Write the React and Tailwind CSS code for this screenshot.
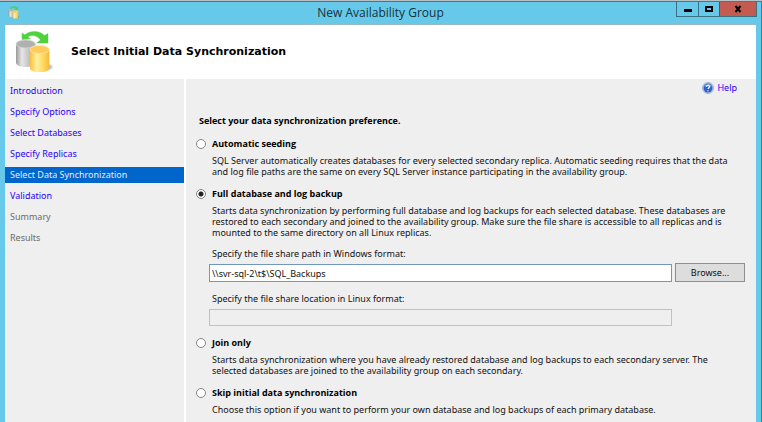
import React, { useState } from "react";

const steps = [
  { name: "Introduction", state: "done" },
  { name: "Specify Options", state: "done" },
  { name: "Select Databases", state: "done" },
  { name: "Specify Replicas", state: "done" },
  { name: "Select Data Synchronization", state: "current" },
  { name: "Validation", state: "done" },
  { name: "Summary", state: "todo" },
  { name: "Results", state: "todo" },
];

const stepStyles = {
  done: "text-[#2a00ff]",
  current: "bg-[#0066cc] text-[#e4eefa]",
  todo: "text-[#6b6b6b]",
};

function DatabasesIcon({ className, id }) {
  return (
    <svg className={className} viewBox="0 0 40 44" aria-hidden="true">
      <defs>
        <linearGradient id={id + "grey"} x1="0" x2="1">
          <stop offset="0" stopColor="#999" />
          <stop offset="0.3" stopColor="#e6e6e6" />
          <stop offset="0.6" stopColor="#c9c9c9" />
          <stop offset="1" stopColor="#a0a0a0" />
        </linearGradient>
        <linearGradient id={id + "gold"} x1="0" x2="1">
          <stop offset="0" stopColor="#fbbf3c" />
          <stop offset="0.35" stopColor="#fff0a2" />
          <stop offset="0.65" stopColor="#ffdc62" />
          <stop offset="1" stopColor="#fab838" />
        </linearGradient>
        <radialGradient id={id + "shade"}>
          <stop offset="0" stopColor="#555" stopOpacity="0.7" />
          <stop offset="1" stopColor="#555" stopOpacity="0" />
        </radialGradient>
      </defs>
      <ellipse cx="32" cy="37" rx="7" ry="4" fill={`url(#${id}shade)`} />
      <path d="M1 14v18.500c0 2.600 4 4.500 9.800 4.500s9.700-1.900 9.700-4.500V14z" fill={`url(#${id}grey)`} />
      <ellipse cx="10.700" cy="14" rx="9.700" ry="4" fill="#b0b0b0" stroke="#d6d6d6" strokeWidth="0.800" />
      <path d="M15 19.500V38c0 2.500 4 4.200 9.700 4.200s9.700-1.700 9.700-4.200V19.500z" fill={`url(#${id}gold)`} />
      <ellipse cx="24.700" cy="19.500" rx="9.600" ry="4" fill="#fccb5c" stroke="#ffe9a0" strokeWidth="0.800" />
      <path d="M7 3l2.600 1.800C15.500 0 25 .300 29.300 5.500L33 3.500v9.500H21.500l3.900-3C22.700 5.600 17 4.300 12.700 7l2.800 1.800L7 9.500z" fill="#4fd23c" stroke="#55c948" strokeWidth="0.400" />
    </svg>
  );
}

function HelpIcon() {
  return (
    <svg className="size-3" viewBox="0 0 12 12" aria-hidden="true">
      <circle cx="6" cy="6" r="5.500" fill="#c9d6ec" stroke="#8ea2c4" strokeWidth="0.800" />
      <circle cx="6" cy="6" r="4.500" fill="#2d63c8" />
      <path d="M2.200 4.700a4.200 4.200 0 0 1 7.600 0Q6 3.300 2.200 4.700z" fill="#84adeb" />
      <path d="M4.400 4.700c.2-1.900 3.300-1.800 3.200 0C7.500 5.700 6 5.800 6 7.100M6 8.200v1" fill="none" stroke="#fff" strokeWidth="1.200" />
    </svg>
  );
}

function Option({ id, title, selected, onSelect, lines, children }) {
  return (
    <section className="pb-[9px]">
      <div className="flex h-4 items-center gap-[6px]">
        <input
          type="radio"
          name="sync"
          id={id}
          checked={selected}
          onChange={onSelect}
          className="size-[10px] shrink-0 appearance-none rounded-full border border-[#858585] bg-white checked:bg-[radial-gradient(circle,#222_0_2px,#fff_3px)]"
        />
        <label htmlFor={id} className="font-['Open_Sans',sans-serif] font-bold text-black">{title}</label>
      </div>
      <p className="mt-[3px] pl-4 leading-[11px] whitespace-nowrap">
        {lines.map((line) => (
          <span key={line} className="block">{line}</span>
        ))}
      </p>
      {children}
    </section>
  );
}

export default function App() {
  const [choice, setChoice] = useState("full");
  const [path, setPath] = useState("\\\\svr-sql-2\\t$\\SQL_Backups");

  return (
    <div className="flex min-h-screen flex-col border-t border-[#b9c0c6] font-['Noto_Sans','Open_Sans',sans-serif] text-[9px] text-[#111]">
      <div className="flex grow flex-col border-t border-r border-t-[#4d7482] border-r-[#3d7d95] bg-[#66c9ea]">
        <header className="grid h-[22px] grid-cols-[1fr_auto_1fr] items-start">
          <DatabasesIcon id="small" className="mt-1 ml-2 h-[13px] w-3" />
          <h1 className="font-['Open_Sans',sans-serif] text-xs leading-[22px] text-[#16323c]">New Availability Group</h1>
          <div className="mr-1 flex h-[15px] justify-self-end border border-t-0 border-[#38707f]">
            <button type="button" aria-label="Minimize" className="flex w-[21px] items-center justify-center">
              <svg className="h-2 w-2" viewBox="0 0 8 8"><path d="M0 4h8v3H0z" fill="#000" /></svg>
            </button>
            <button type="button" aria-label="Maximize" className="flex w-[21px] items-center justify-center border-l border-[#38707f]">
              <svg className="h-2 w-2" viewBox="0 0 8 8"><path d="M0 1h8v6H0zM2 3v2h4V3z" fill="#000" fillRule="evenodd" /></svg>
            </button>
            <button type="button" aria-label="Close" className="flex w-[37px] items-center justify-center border-l border-[#7d4540] bg-[#c45b50]">
              <svg className="h-2 w-2" viewBox="0 0 8 8"><path d="M1.500 1l5 6M6.500 1l-5 6" stroke="#000" strokeWidth="2" /></svg>
            </button>
          </div>
        </header>

        <div className="mr-[5px] ml-[5px] flex grow flex-col bg-[#efefef]">
          <div className="flex h-[55px] items-center border-t border-[#9ab9c4] bg-white pl-[10px]">
            <DatabasesIcon id="large" className="h-11 w-10" />
            <h2 className="ml-4 font-['DejaVu_Sans',sans-serif] text-[11px] font-bold text-black">
              Select Initial Data Synchronization
            </h2>
          </div>

          <div className="flex grow">
            <nav className="flex w-[181px] shrink-0 flex-col gap-[5px] border-r-2 border-white pt-[4px]">
              {steps.map((step) => (
                <a
                  key={step.name}
                  href="#"
                  aria-current={step.state === "current" ? "step" : undefined}
                  className={"block h-4 pl-[5px] leading-4 " + stepStyles[step.state]}
                >
                  {step.name}
                </a>
              ))}
            </nav>

            <main className="min-w-0 grow pt-[3px] pr-[11px] pl-[10px]">
              <div className="flex justify-end pr-2">
                <a href="#" className="flex h-3 items-center gap-[3px] text-[#2a00ff]">
                  <HelpIcon />
                  Help
                </a>
              </div>

              <h3 className="mt-[19px] mb-[7px] pl-[3px] font-['Open_Sans',sans-serif] leading-4 font-bold text-black">
                Select your data synchronization preference.
              </h3>

              <Option
                id="auto"
                title="Automatic seeding"
                selected={choice === "auto"}
                onSelect={() => setChoice("auto")}
                lines={[
                  "SQL Server automatically creates databases for every selected secondary replica. Automatic seeding requires that the data",
                  "and log file paths are the same on every SQL Server instance participating in the availability group.",
                ]}
              />

              <Option
                id="full"
                title="Full database and log backup"
                selected={choice === "full"}
                onSelect={() => setChoice("full")}
                lines={[
                  "Starts data synchronization by performing full database and log backups for each selected database. These databases are",
                  "restored to each secondary and joined to the availability group. Make sure the file share is accessible to all replicas and is",
                  "mounted to the same directory on all Linux replicas.",
                ]}
              >
                <div className="mt-2 ml-[13px] grid grid-cols-[1fr_70px] items-center gap-x-[3px]">
                  <label htmlFor="windows" className="col-span-2 pl-[3px] leading-4">
                    Specify the file share path in Windows format:
                  </label>
                  <input
                    id="windows"
                    type="text"
                    value={path}
                    onChange={(e) => setPath(e.target.value)}
                    className="mt-[2px] h-[18px] min-w-0 border border-[#7197bb] bg-white px-[2px]"
                  />
                  <button type="button" className="mt-px h-[19px] border border-[#8f8f8f] bg-[#dddddd]">
                    Browse...
                  </button>
                  <label htmlFor="linux" className="col-span-2 mt-[9px] pl-[3px] leading-4">
                    Specify the file share location in Linux format:
                  </label>
                  <input
                    id="linux"
                    type="text"
                    disabled
                    className="mt-[2px] h-[17px] min-w-0 border border-[#bfc1c3] bg-[#efefef] px-[2px]"
                  />
                </div>
              </Option>

              <Option
                id="join"
                title="Join only"
                selected={choice === "join"}
                onSelect={() => setChoice("join")}
                lines={[
                  "Starts data synchronization where you have already restored database and log backups to each secondary server. The",
                  "selected databases are joined to the availability group on each secondary.",
                ]}
              />

              <Option
                id="skip"
                title="Skip initial data synchronization"
                selected={choice === "skip"}
                onSelect={() => setChoice("skip")}
                lines={["Choose this option if you want to perform your own database and log backups of each primary database."]}
              />
            </main>
          </div>
        </div>
      </div>
    </div>
  );
}
